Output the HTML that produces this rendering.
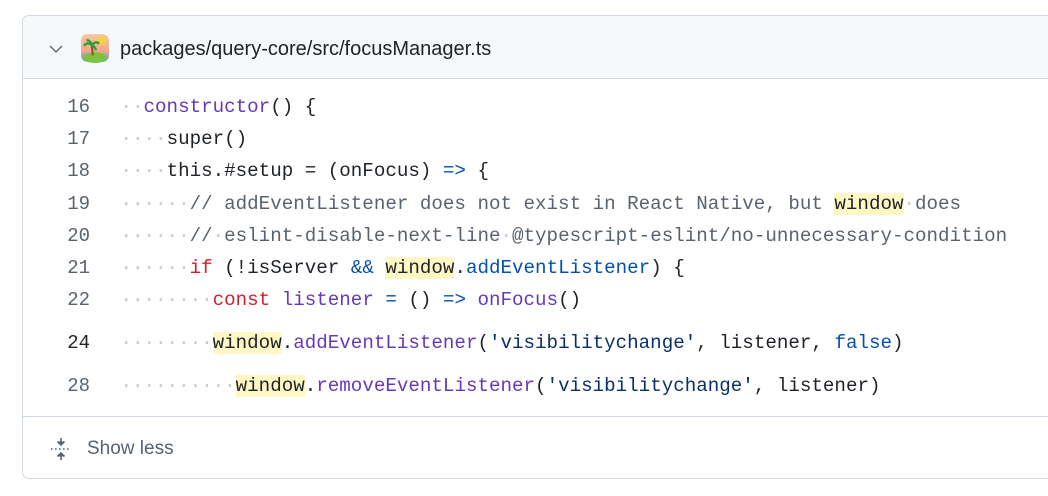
<!DOCTYPE html>
<html><head><meta charset="utf-8"><style>
*{margin:0;padding:0;box-sizing:border-box}
body{width:1048px;height:496px;background:#fff;font-family:"Liberation Sans",sans-serif;position:relative;overflow:hidden}
.card{position:absolute;left:22px;top:15px;width:1040px;height:464px;border:1px solid #d1d9e0;border-radius:7px;overflow:hidden}
.hdr{height:63px;background:#f6f8fa;border-bottom:1px solid #d1d9e0;position:relative}
.hdr .t{position:absolute;left:97px;top:22px;font-size:20px;color:#1f2328}
.code{position:relative;height:337px}
.ln{position:absolute;left:0;width:67px;text-align:right;font-family:"Liberation Mono",monospace;font-size:19px;color:#59636e;line-height:32px}
.l{position:absolute;left:97.5px;font-family:"Liberation Mono",monospace;font-size:19.2px;white-space:pre;color:#1f2328;line-height:32px}
.d{color:#c5cbd1}
.p{color:#6639ba}.r{color:#cf222e}.b{color:#0550ae}.s{color:#0a3069}.c{color:#59636e}
.h{background:#fff8c5}
.ftr{border-top:1px solid #d1d9e0;height:64px;position:relative}
.ftr .t{position:absolute;left:64px;top:21px;font-size:19px;color:#59636e}
</style></head><body>
<div class="card">
<div class="hdr">
<svg style="position:absolute;left:25px;top:25px" width="16" height="16" viewBox="0 0 16 16"><path d="M2.5 5.5 L8 11 L13.5 5.5" fill="none" stroke="#59636e" stroke-width="1.4" stroke-linecap="round" stroke-linejoin="round"/></svg>
<svg style="position:absolute;left:57px;top:17px" width="30" height="30" viewBox="0 0 28 28"><defs><linearGradient id="g" x1="0" y1="0" x2="0" y2="1"><stop offset="0" stop-color="#f7c6a0"/><stop offset=".6" stop-color="#f3a78a"/><stop offset="1" stop-color="#3fa7d8"/></linearGradient></defs><rect x="1" y="1" width="26" height="26" rx="6" fill="url(#g)"/><circle cx="20" cy="7" r="4" fill="#ffd23c"/><ellipse cx="14" cy="23" rx="11" ry="5" fill="#7cc241"/><path d="M12 21 L11 11" stroke="#8a5a2b" stroke-width="2"/><path d="M11 11 Q6 8 4 12 M11 11 Q15 7 18 10 M11 11 Q9 6 6 7 M11 11 Q14 13 15 16" stroke="#2f9e3a" stroke-width="2.2" fill="none"/></svg>
<div class="t">packages/query-core/src/focusManager.ts</div>
</div>
<div class="code">
<div class="ln" style="top:12px">16</div><div class="l" style="top:12px"><span class="d">··</span><span class="p">constructor</span>() {</div>
<div class="ln" style="top:44px">17</div><div class="l" style="top:44px"><span class="d">····</span>super()</div>
<div class="ln" style="top:76px">18</div><div class="l" style="top:76px"><span class="d">····</span>this.#setup = (onFocus) <span class="b">=&gt;</span> {</div>
<div class="ln" style="top:109px">19</div><div class="l c" style="top:109px"><span class="d">······</span>// addEventListener does not exist in React Native, but <span class="h" style="color:#1f2328">window</span><span class="d">·</span>does</div>
<div class="ln" style="top:141px">20</div><div class="l c" style="top:141px"><span class="d">······</span>//<span class="d">·</span>eslint-disable-next-line<span class="d">·</span>@typescript-eslint/no-unnecessary-condition</div>
<div class="ln" style="top:173px">21</div><div class="l" style="top:173px"><span class="d">······</span><span class="r">if</span> (!isServer <span class="b">&amp;&amp;</span> <span class="h">window</span>.<span class="b">addEventListener</span>) {</div>
<div class="ln" style="top:205px">22</div><div class="l" style="top:205px"><span class="d">········</span><span class="r">const</span> <span class="p">listener</span> <span class="b">=</span> () <span class="b">=&gt;</span> <span class="p">onFocus</span>()</div>
<div class="ln" style="top:248px;color:#1f2328">24</div><div class="l" style="top:248px"><span class="d">········</span><span class="h">window</span>.<span class="p">addEventListener</span>(<span class="s">'visibilitychange'</span>, listener, <span class="b">false</span>)</div>
<div class="ln" style="top:291px">28</div><div class="l" style="top:291px"><span class="d">··········</span><span class="h">window</span>.<span class="p">removeEventListener</span>(<span class="s">'visibilitychange'</span>, listener)</div>
</div>
<div class="ftr">
<svg style="position:absolute;left:27px;top:20px" width="22" height="24" viewBox="0 0 22 24"><path d="M11 1 V7 M7.5 4.5 L11 8 L14.5 4.5 M11 23 V17 M7.5 19.5 L11 16 L14.5 19.5" stroke="#59636e" stroke-width="1.6" fill="#59636e"/><path d="M1 12 H21" stroke="#59636e" stroke-width="1.6" stroke-dasharray="1.6 2.4"/></svg>
<div class="t">Show less</div>
</div>
</div>
</body></html>
